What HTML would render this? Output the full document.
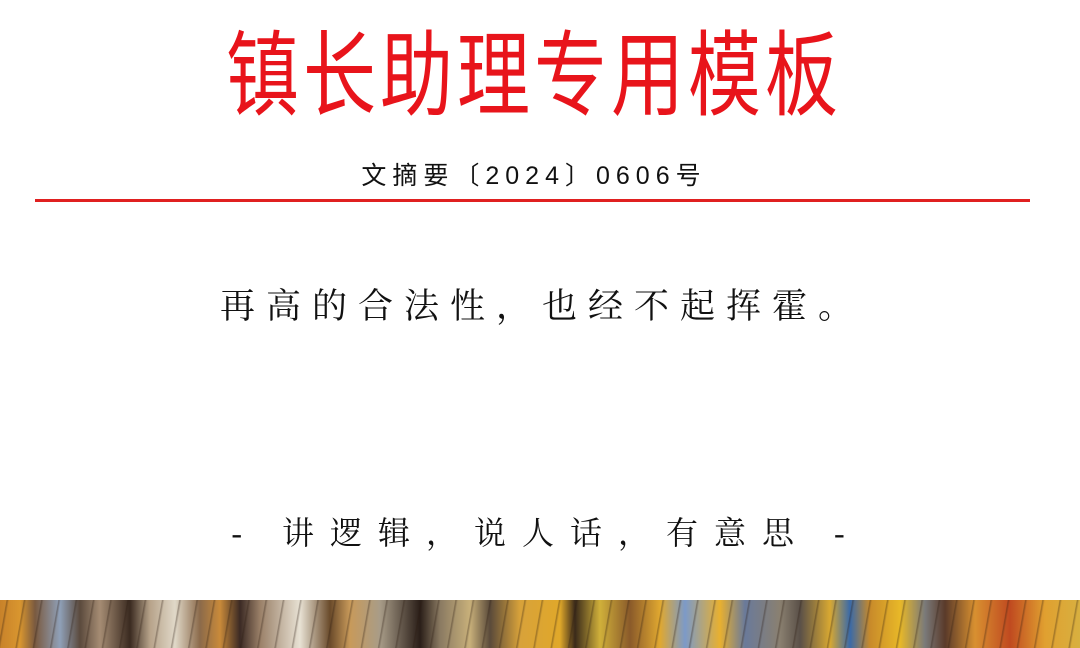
<!DOCTYPE html>
<html><head><meta charset="utf-8"><style>
body{margin:0;width:1080px;height:648px;background:#fff;overflow:hidden;position:relative;font-family:"Liberation Sans","Noto Sans CJK SC",sans-serif}
.t{position:absolute;left:0;width:1080px;text-align:center;white-space:nowrap}
#title{top:26px;font-family:"Liberation Sans","Noto Sans CJK SC",sans-serif;color:#e8141b;font-size:73px;letter-spacing:4px;transform:scaleY(1.28);transform-origin:center top;line-height:80px;left:-6px}
#sub{top:156px;font-size:25px;color:#111;letter-spacing:6px;left:-6px}
#line{position:absolute;left:35px;width:995px;top:199px;height:3px;background:#e02020}
#body{top:279px;font-size:35px;color:#111;letter-spacing:11px;left:2px;font-family:"Liberation Serif","Noto Serif CJK SC",serif}
#foot{top:508px;font-size:32px;color:#111;letter-spacing:16px;left:6px;font-family:"Liberation Serif","Noto Serif CJK SC",serif}
#paint{position:absolute;left:0;top:600px;width:1080px;height:48px;
background:linear-gradient(90deg,#c8822a 0,#d9962f 20px,#7a5a40 35px,#8fa0b8 60px,#5b4a3d 80px,#a58c73 100px,#3a2a20 130px,#b7a38a 150px,#e0d8c8 175px,#8b6a4a 200px,#c98a3a 220px,#3b2a24 240px,#9a8068 260px,#e8e2d4 300px,#6a4a2a 330px,#c89a5a 350px,#a89c88 380px,#2a1e18 420px,#8a7a62 440px,#c8b07a 470px,#5a4a3a 490px,#d8a23a 520px,#e0a82a 560px,#3a2a1a 575px,#d0b03a 600px,#8a5a2a 630px,#e0a830 660px,#7c9ac8 685px,#e8b030 720px,#6a7a9a 745px,#8a8070 780px,#5a5048 800px,#d8a832 830px,#3a6aa8 850px,#c88a2a 870px,#e8b828 900px,#7a7a7a 925px,#5a3a2a 945px,#d89030 975px,#c04a20 1010px,#e0a030 1045px,#d8b040 1080px)}
#paint2{position:absolute;left:0;top:600px;width:1080px;height:48px;opacity:.35;
background:repeating-linear-gradient(100deg,transparent 0,transparent 6px,#2a1a10 7px,transparent 9px,transparent 17px)}
</style></head><body>
<div class="t" id="title">镇长助理专用模板</div>
<div class="t" id="sub">文摘要〔2024〕0606号</div>
<div id="line"></div>
<div class="t" id="body">再高的合法性，也经不起挥霍。</div>
<div class="t" id="foot">- 讲逻辑，说人话，有意思 -</div>
<div id="paint"></div><div id="paint2"></div>
</body></html>
